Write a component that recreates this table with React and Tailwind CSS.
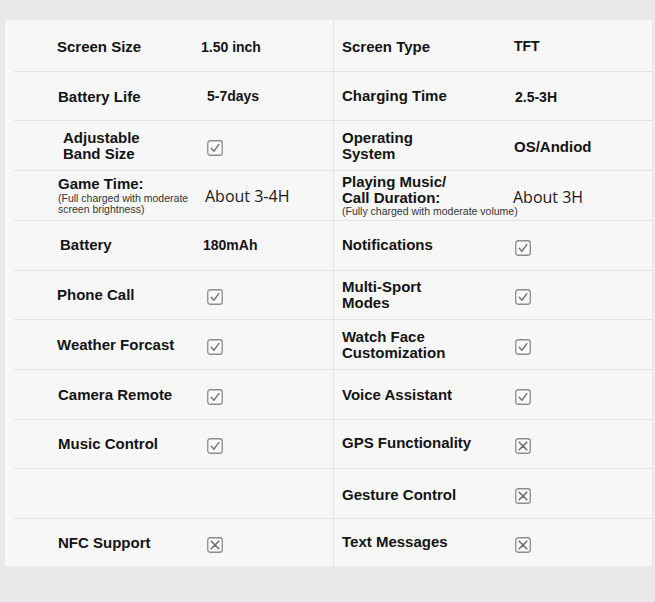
import React from "react";

function Check() {
  return (
    <svg width="16" height="16" viewBox="0 0 16 16" className="block">
      <rect x="0.75" y="0.75" width="14.5" height="14.5" rx="2.5" fill="#fafafa" stroke="#8c8c8c" strokeWidth="1.3" />
      <path d="M4.3 8.3 L6.9 11.2 L11.8 4.6" fill="none" stroke="#777" strokeWidth="1.5" strokeLinecap="round" strokeLinejoin="round" />
    </svg>
  );
}

function Cross() {
  return (
    <svg width="16" height="16" viewBox="0 0 16 16" className="block">
      <rect x="0.75" y="0.75" width="14.5" height="14.5" rx="2.5" fill="#fafafa" stroke="#8c8c8c" strokeWidth="1.3" />
      <path d="M4.2 4.2 L11.8 11.8 M11.8 4.2 L4.2 11.8" fill="none" stroke="#6f6f6f" strokeWidth="1.6" strokeLinecap="round" />
    </svg>
  );
}

const L = ({ children, cls = "" }) => (
  <div className={"text-[15px] font-bold leading-[16px] text-[#141414] " + cls}>{children}</div>
);
const V = ({ children, cls = "" }) => (
  <div className={"text-[14px] font-bold leading-[16px] text-[#141414] " + cls}>{children}</div>
);
const Soft = ({ children, cls = "" }) => (
  <div className={"text-[16px] leading-[18px] text-[#1a1a1a] " + cls} style={{ fontFamily: "'Open Sans', 'DejaVu Sans', sans-serif" }}>
    {children}
  </div>
);

function LeftCell({ label, value, last, h }) {
  return (
    <div className={"flex items-center " + h + (last ? "" : " border-b border-[#e2e2e2]")}>
      <div className="pl-[43px] w-[187px] shrink-0">{label}</div>
      <div>{value}</div>
    </div>
  );
}

function RightCell({ label, value, last, h }) {
  return (
    <div className={"flex items-center border-l border-[#e2e2e2] " + h + (last ? "" : " border-b")}>
      <div className="pl-[8px] w-[180px] shrink-0">{label}</div>
      <div>{value}</div>
    </div>
  );
}

const Box = ({ kind, cls = "" }) => (
  <div className={"mt-[4px] " + cls}>{kind === "x" ? <Cross /> : <Check />}</div>
);

export default function App() {
  const rows = [
    {
      h: "h-[52px]",
      l: [<L cls="mt-[2px]">Screen Size</L>, <V cls="mt-[3px]">1.50 inch</V>],
      r: [<L cls="mt-[2px]">Screen Type</L>, <V cls="mt-[1px]">TFT</V>],
    },
    {
      h: "h-[49px]",
      l: [<L cls="ml-[1px] mt-[2px]">Battery Life</L>, <V cls="ml-[6px]">5-7days</V>],
      r: [<L>Charging Time</L>, <V cls="ml-[1px] mt-[2px]">2.5-3H</V>],
    },
    {
      h: "h-[50px]",
      l: [<L cls="ml-[6px]">Adjustable<br />Band Size</L>, <Box cls="ml-[6px]" />],
      r: [<L>Operating<br />System</L>, <V cls="text-[15px] mt-[2px]">OS/Andiod</V>],
    },
    {
      h: "h-[50px]",
      l: [
        <div className="ml-[1px]">
          <L cls="leading-[16px]">Game Time:</L>
          <div className="text-[10.5px] leading-[11px] text-[#333] mt-[1px]">
            (Full charged with moderate<br />screen brightness)
          </div>
        </div>,
        <Soft cls="ml-[4px]">About 3-4H</Soft>,
      ],
      r: [
        <div className="w-[200px]">
          <L cls="leading-[15px]">Playing Music/<br />Call Duration:</L>
          <div className="text-[10.5px] leading-[11px] text-[#333] whitespace-nowrap">
            (Fully charged with moderate volume)
          </div>
        </div>,
        <Soft cls="-ml-[1px] mt-[3px]">About 3H</Soft>,
      ],
    },
    {
      h: "h-[50px]",
      l: [<L cls="ml-[3px] mt-[-2px]">Battery</L>, <V cls="ml-[2px] mt-[-2px]">180mAh</V>],
      r: [<L cls="mt-[-2px]">Notifications</L>, <Box cls="ml-[1px]" />],
    },
    {
      h: "h-[49px]",
      l: [<L>Phone Call</L>, <Box cls="ml-[6px]" />],
      r: [<L>Multi-Sport<br />Modes</L>, <Box cls="ml-[1px]" />],
    },
    {
      h: "h-[50px]",
      l: [<L>Weather Forcast</L>, <Box cls="ml-[6px]" />],
      r: [<L>Watch Face<br />Customization</L>, <Box cls="ml-[1px]" />],
    },
    {
      h: "h-[50px]",
      l: [<L cls="ml-[1px]">Camera Remote</L>, <Box cls="ml-[6px]" />],
      r: [<L>Voice Assistant</L>, <Box cls="ml-[1px]" />],
    },
    {
      h: "h-[49px]",
      l: [<L cls="ml-[1px]">Music Control</L>, <Box cls="ml-[6px]" />],
      r: [<L cls="mt-[-2px]">GPS Functionality</L>, <Box kind="x" cls="ml-[1px]" />],
    },
    {
      h: "h-[50px]",
      l: [null, null],
      r: [<L cls="mt-[3px]">Gesture Control</L>, <Box kind="x" cls="ml-[1px]" />],
    },
    {
      h: "h-[47px]",
      l: [<L cls="ml-[1px]">NFC Support</L>, <Box kind="x" cls="ml-[6px]" />],
      r: [<L cls="mt-[-2px]">Text Messages</L>, <Box kind="x" cls="ml-[1px]" />],
    },
  ];

  return (
    <div
      className="w-[655px] h-[602px] bg-[#e9e9e9] pt-[20px] pl-[5px]"
      style={{ fontFamily: "'Liberation Sans', Arial, sans-serif" }}
    >
      <div className="w-[647px] bg-[#f7f7f7] pl-[9px] grid grid-cols-[319px_319px]">
        {rows.map((r, i) => (
          <React.Fragment key={i}>
            <LeftCell h={r.h} label={r.l[0]} value={r.l[1]} last={i === rows.length - 1} />
            <RightCell h={r.h} label={r.r[0]} value={r.r[1]} last={i === rows.length - 1} />
          </React.Fragment>
        ))}
      </div>
    </div>
  );
}
